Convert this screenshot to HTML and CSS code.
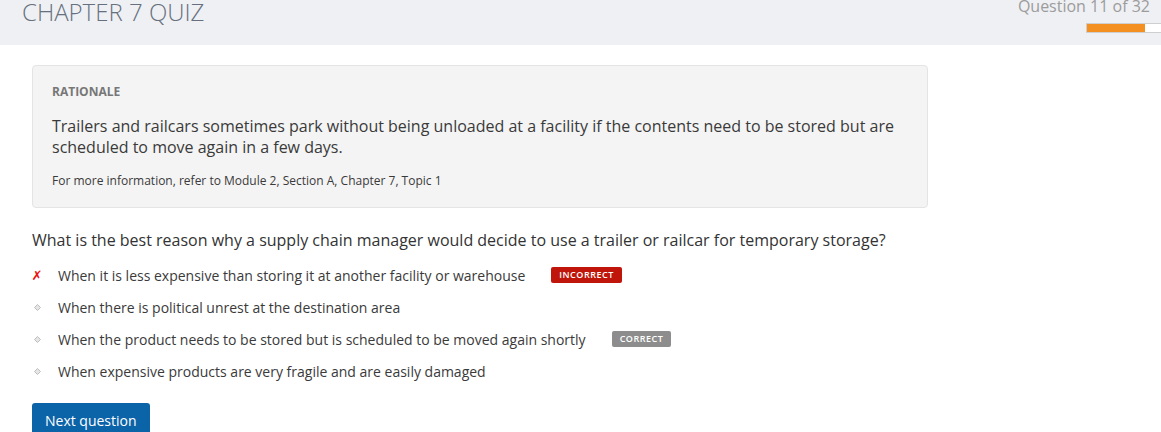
FILE: index.html
```html
<!DOCTYPE html>
<html lang="en">
<head>
<meta charset="utf-8">
<title>Chapter 7 Quiz</title>
<link rel="stylesheet" href="styles.css">
</head>
<body>
<header class="topbar">
  <h1 class="quiz-title">CHAPTER 7 QUIZ</h1>
  <div class="progress-wrap">
    <div class="progress-label">Question 11 of 32</div>
    <div class="progress-bar"><div class="progress-fill"></div></div>
  </div>
</header>
<main class="content">
  <section class="rationale">
    <div class="rationale-head">RATIONALE</div>
    <p class="rationale-text">Trailers and railcars sometimes park without being unloaded at a facility if the contents need to be stored but are scheduled to move again in a few days.</p>
    <p class="rationale-ref">For more information, refer to Module 2, Section A, Chapter 7, Topic 1</p>
  </section>
  <p class="question">What is the best reason why a supply chain manager would decide to use a trailer or railcar for temporary storage?</p>
  <ul class="options">
    <li class="option">
      <span class="opt-icon wrong">&#x2717;</span>
      <span class="opt-text">When it is less expensive than storing it at another facility or warehouse</span>
      <span class="badge badge-incorrect">INCORRECT</span>
    </li>
    <li class="option">
      <span class="opt-icon"><svg class="diamond" viewBox="0 0 7 7" width="7" height="7"><path d="M3.5 0.5 L6.5 3.5 L3.5 6.5 L0.5 3.5 Z" fill="#e6e6e6" stroke="#bdbdbd" stroke-width="1"/></svg></span>
      <span class="opt-text">When there is political unrest at the destination area</span>
    </li>
    <li class="option">
      <span class="opt-icon"><svg class="diamond" viewBox="0 0 7 7" width="7" height="7"><path d="M3.5 0.5 L6.5 3.5 L3.5 6.5 L0.5 3.5 Z" fill="#e6e6e6" stroke="#bdbdbd" stroke-width="1"/></svg></span>
      <span class="opt-text">When the product needs to be stored but is scheduled to be moved again shortly</span>
      <span class="badge badge-correct">CORRECT</span>
    </li>
    <li class="option">
      <span class="opt-icon"><svg class="diamond" viewBox="0 0 7 7" width="7" height="7"><path d="M3.5 0.5 L6.5 3.5 L3.5 6.5 L0.5 3.5 Z" fill="#e6e6e6" stroke="#bdbdbd" stroke-width="1"/></svg></span>
      <span class="opt-text">When expensive products are very fragile and are easily damaged</span>
    </li>
  </ul>
  <button class="next-btn" type="button">Next question</button>
</main>
</body>
</html>
```

FILE: styles.css
```css
html, body {
  margin: 0;
  padding: 0;
  background: #ffffff;
  font-family: "Open Sans", "Liberation Sans", sans-serif;
  color: #333333;
}

body {
  overflow: hidden;
}

.topbar {
  height: 45px;
  background: #eff0f4;
  display: flex;
  justify-content: space-between;
  align-items: flex-start;
  overflow: hidden;
}

.quiz-title {
  margin: 0 0 0 22px;
  font-size: 24px;
  font-weight: 300;
  line-height: 23px;
  color: #66707e;
  letter-spacing: 0;
}

.progress-wrap {
  width: 140px;
  display: flex;
  flex-direction: column;
  align-items: flex-end;
}

.progress-label {
  font-size: 16px;
  line-height: 12px;
  color: #9c9c9c;
  white-space: nowrap;
  padding-right: 11px;
}

.progress-bar {
  margin-top: 11px;
  align-self: flex-start;
  margin-left: 65px;
  width: 110px;
  flex: none;
  height: 8px;
  border: 1px solid #cfcfcf;
  background: #ffffff;
}

.progress-fill {
  width: 58px;
  height: 100%;
  background: #f39021;
}

.content {
  padding: 20px 0 0 32px;
}

.rationale {
  width: 856px;
  padding: 18px 19px;
  background: #f4f4f4;
  border: 1px solid #e4e4e4;
  border-radius: 4px;
}

.rationale-head {
  font-size: 12px;
  font-weight: 700;
  line-height: 16px;
  color: #777777;
}

.rationale-text {
  margin: 16px 0 0;
  font-size: 16px;
  line-height: 21px;
  color: #3a3a3a;
}

.rationale-ref {
  margin: 15px 0 0;
  font-size: 12px;
  line-height: 16px;
  color: #3a3a3a;
}

.question {
  margin: 21px 0 0;
  font-size: 16px;
  line-height: 22px;
  color: #333333;
}

.options {
  list-style: none;
  margin: 8px 0 0;
  padding: 0;
}

.option {
  display: flex;
  align-items: center;
  height: 32px;
  font-size: 14px;
  color: #3a3a3a;
}

.opt-icon {
  width: 10px;
  display: flex;
  justify-content: center;
  align-items: center;
  margin-right: 16px;
}

.opt-icon.wrong {
  color: #e8110e;
  font-size: 13px;
  font-weight: 700;
  font-family: "DejaVu Sans", sans-serif;
}

.diamond {
  display: block;
}

.badge {
  margin-left: 26px;
  height: 16px;
  line-height: 16px;
  padding: 0 8px;
  border-radius: 2px;
  font-size: 9px;
  font-weight: 600;
  letter-spacing: 0.5px;
  color: #ffffff;
}

.badge-incorrect {
  background: #c0150a;
}

.badge-correct {
  background: #8d8d8d;
}

.next-btn {
  margin-top: 16px;
  height: 34px;
  padding: 0 13px;
  background: #0b63a8;
  color: #ffffff;
  border: none;
  border-radius: 3px;
  font-family: "Open Sans", "Liberation Sans", sans-serif;
  font-size: 14px;
  cursor: pointer;
}
```
